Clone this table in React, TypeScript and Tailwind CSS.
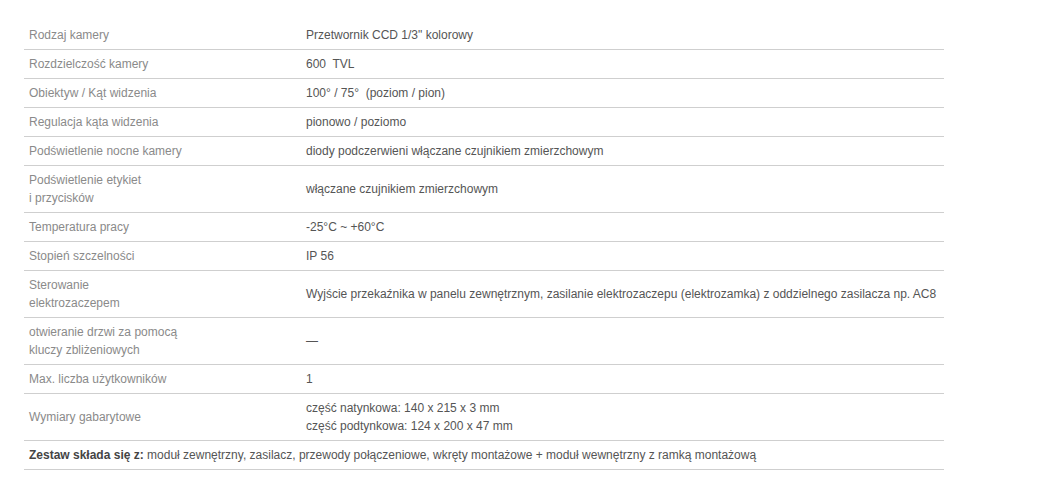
import React from "react";

const rows: [React.ReactNode, React.ReactNode][] = [
  ["Rodzaj kamery", "Przetwornik CCD 1/3\" kolorowy"],
  ["Rozdzielczość kamery", "600\u00a0 TVL"],
  ["Obiektyw / Kąt widzenia", "100° / 75°\u00a0 (poziom / pion)"],
  ["Regulacja kąta widzenia", "pionowo / poziomo"],
  ["Podświetlenie nocne kamery", "diody podczerwieni włączane czujnikiem zmierzchowym"],
  [<>Podświetlenie etykiet<br />i przycisków</>, "włączane czujnikiem zmierzchowym"],
  ["Temperatura pracy", "-25°C ~ +60°C"],
  ["Stopień szczelności", "IP 56"],
  [<>Sterowanie<br />elektrozaczepem</>, "Wyjście przekaźnika w panelu zewnętrznym, zasilanie elektrozaczepu (elektrozamka) z oddzielnego zasilacza np. AC8"],
  [<>otwieranie drzwi za pomocą<br />kluczy zbliżeniowych</>, "—"],
  ["Max. liczba użytkowników", "1"],
  ["Wymiary gabarytowe", <>część natynkowa: 140 x 215 x 3 mm<br />część podtynkowa: 124 x 200 x 47 mm</>],
];

export default function App() {
  return (
    <div className="w-[1055px] h-[495px] bg-white pt-[21px] pl-[24px]" style={{ fontFamily: '"Liberation Sans", Arial, sans-serif' }}>
      <table className="w-[920px] border-collapse text-[12px] leading-[18px]">
        <tbody>
          {rows.map(([l, v], i) => (
            <tr key={i} className="border-b border-[#cfcfcf]">
              <td className="w-[277px] px-[5px] py-[5px] align-middle text-[#8a8a8a]">{l}</td>
              <td className="px-[5px] py-[5px] align-middle text-[#555555]">{v}</td>
            </tr>
          ))}
          <tr className="border-b border-[#cfcfcf]">
            <td colSpan={2} className="px-[5px] py-[5px] text-[#555555]">
              <b className="text-[#444444]">Zestaw składa się z:</b> moduł zewnętrzny, zasilacz, przewody połączeniowe, wkręty montażowe + moduł wewnętrzny z ramką montażową
            </td>
          </tr>
        </tbody>
      </table>
    </div>
  );
}
